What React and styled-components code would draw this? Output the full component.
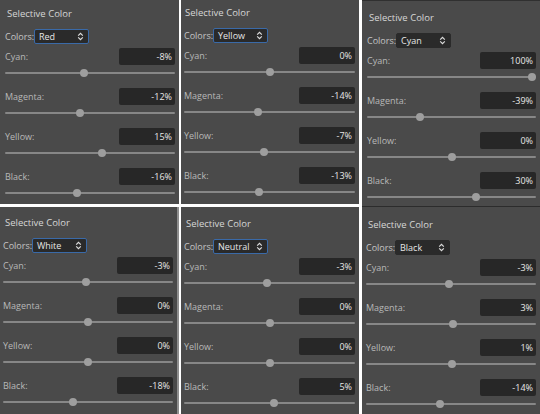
import React from 'react'
import styled, { createGlobalStyle } from 'styled-components'

const GlobalStyle = createGlobalStyle`
  body {
    margin: 0;
    background: #ffffff;
    font-family: 'Open Sans', 'Liberation Sans', sans-serif;
  }
`

const Board = styled.div`
  display: flex;
  width: 540px;
  height: 414px;
  background: #ffffff;
  overflow: hidden;
`

const Column = styled.div`
  display: flex;
  flex-direction: column;
  gap: ${(p) => p.$gap}px;
  width: ${(p) => p.$width}px;
  margin-left: ${(p) => p.$offset || 0}px;
`

const Panel = styled.div`
  box-sizing: border-box;
  height: ${(p) => p.$height}px;
  padding: ${(p) => p.$top}px ${(p) => p.$right}px 0 ${(p) => p.$left}px;
  background: #4a4a4a;
  overflow: hidden;
  border-right: ${(p) => (p.$edge ? '2px solid #8e8e8e' : 'none')};
  border-top: ${(p) => (p.$capTop ? '1px solid #303030' : 'none')};
  border-bottom: ${(p) => (p.$capBottom ? '1px solid #2c2c2c' : 'none')};
`

const Title = styled.div`
  height: 14px;
  line-height: 14px;
  margin-left: ${(p) => p.$indent}px;
  font-size: 9.5px;
  color: #d6d6d6;
  white-space: nowrap;
`

const ColorsRow = styled.div`
  display: flex;
  align-items: center;
  height: 15px;
  margin-top: 8px;
`

const ColorsLabel = styled.span`
  width: 29px;
  font-size: 9px;
  color: #c4c4c4;
  white-space: nowrap;
`

const Select = styled.div`
  box-sizing: border-box;
  display: flex;
  align-items: center;
  justify-content: space-between;
  width: 55px;
  height: 15px;
  padding: 0 4px 0 4px;
  background: #2a2a2a;
  border: 1px solid ${(p) => (p.$focused ? '#3a6aa8' : '#2a2a2a')};
  border-radius: 2px;
  font-size: 9px;
  color: #e6e6e6;
`

const Params = styled.div`
  margin-top: 4px;
`

const ParamRow = styled.div`
  display: flex;
  align-items: center;
  justify-content: space-between;
  height: 17px;
`

const ParamLabel = styled.span`
  font-size: 9px;
  color: #b8b8b8;
`

const ValueBox = styled.div`
  box-sizing: border-box;
  width: 56px;
  height: 17px;
  padding-right: 3px;
  background: #272727;
  border-radius: 2px;
  font-size: 9px;
  line-height: 17px;
  text-align: right;
  color: #e8e8e8;
`

const Track = styled.div`
  position: relative;
  height: 2px;
  margin: 7px 0 14px;
  background: #878787;
  border-radius: 1px;
`

const Thumb = styled.span`
  position: absolute;
  top: -3px;
  width: 8px;
  height: 8px;
  border-radius: 50%;
  background: #9e9e9e;
`

const UpDown = () => (
  <svg width="7" height="9" viewBox="0 0 7 9">
    <path
      d="M1.2 3.6 L3.5 1.3 L5.8 3.6 M1.2 5.4 L3.5 7.7 L5.8 5.4"
      fill="none"
      stroke="#dcdcdc"
      strokeWidth="1.2"
    />
  </svg>
)

const channels = ['Cyan', 'Magenta', 'Yellow', 'Black']

const SelectiveColor = ({ color, focused, values, indent = 2, ...layout }) => (
  <Panel {...layout}>
    <Title $indent={indent}>Selective Color</Title>
    <ColorsRow>
      <ColorsLabel>Colors:</ColorsLabel>
      <Select $focused={focused}>
        <span>{color}</span>
        <UpDown />
      </Select>
    </ColorsRow>
    <Params>
      {channels.map((name, i) => (
        <div key={name}>
          <ParamRow>
            <ParamLabel>{name}:</ParamLabel>
            <ValueBox>{values[i]}%</ValueBox>
          </ParamRow>
          <Track>
            <Thumb style={{ left: `calc((100% - 8px) * ${(values[i] + 100) / 200})` }} />
          </Track>
        </div>
      ))}
    </Params>
  </Panel>
)

const App = () => {
  return (
    <>
      <GlobalStyle />
      <Board>
        <Column $width={179} $gap={3}>
          <SelectiveColor color="Red" focused values={[-8, -12, 15, -16]}
            $height={204} $top={7} $left={5} $right={4} />
          <SelectiveColor color="White" focused values={[-3, 0, 0, -18]}
            $height={207} $top={9} $left={3} $right={4} $edge />
        </Column>
        <Column $width={178} $gap={3} $offset={2}>
          <SelectiveColor color="Yellow" focused values={[0, -14, -7, -13]} indent={1}
            $height={204} $top={6} $left={3} $right={4} />
          <SelectiveColor color="Neutral" focused values={[-3, 0, 0, 5]}
            $height={207} $top={10} $left={3} $right={4} />
        </Column>
        <Column $width={178} $gap={0} $offset={3}>
          <SelectiveColor color="Cyan" values={[100, -39, 0, 30]}
            $height={207} $top={10} $left={5} $right={4} $capTop $capBottom />
          <SelectiveColor color="Black" values={[-3, 3, 1, -14]}
            $height={207} $top={11} $left={4} $right={4} />
        </Column>
      </Board>
    </>
  )
}

export default App
